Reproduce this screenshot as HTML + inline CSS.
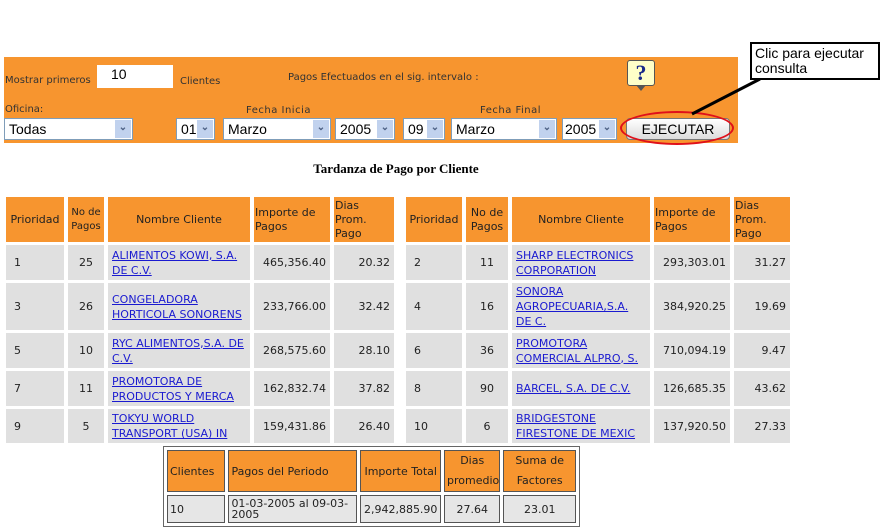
<!DOCTYPE html>
<html><head><meta charset="utf-8"><style>
body{margin:0;width:884px;height:532px;background:#fff;position:relative;overflow:hidden;font-family:"DejaVu Sans","Liberation Sans",sans-serif;}
.a{position:absolute;}
.bar{left:4px;top:57px;width:734px;height:86px;background:#f7952f;}
.lbl{font-size:10px;color:#333;white-space:nowrap;}
.sel{position:absolute;top:118px;height:22px;background:#fff;border:1px solid #7f9db9;box-sizing:border-box;font-family:"Liberation Sans",sans-serif;font-size:14px;line-height:20px;padding-left:4px;color:#000;}
.sel b{position:absolute;right:1px;top:1px;width:16px;height:18px;background:#c1d2ee;font-size:10px;line-height:16px;text-align:center;color:#4d6185;font-weight:bold;}
table.t{position:absolute;border-spacing:4px 3px;table-layout:fixed;font-size:11px;}
table.t td{background:#e0e0e0;padding:0 4px;color:#222;line-height:15px;}
table.t td:first-child{padding-left:8px;}
table.t th{background:#f7952f;font-weight:normal;color:#222;padding:0 1px;text-align:center;line-height:14px;}
table.t a{color:#1a1ad0;text-decoration:underline;}
.r{text-align:right;}.c{text-align:center;}
table.s{position:absolute;left:163px;top:446px;border:1px solid #666;border-spacing:3px;font-size:11px;table-layout:fixed;}
table.s td,table.s th{border:1px solid #555;padding:0 2px;color:#222;}
table.s th{background:#f7952f;font-weight:normal;}
table.s td{background:#e6e6e6;}
</style></head><body>
<div class="a bar"></div>
<div class="a lbl" style="left:5px;top:75px;">Mostrar primeros</div>
<div class="a" style="left:97px;top:65px;width:76px;height:23px;background:#fff;font-family:'Liberation Sans',sans-serif;font-size:14px;line-height:18px;padding-left:14px;box-sizing:border-box;">10</div>
<div class="a lbl" style="left:180px;top:76px;">Clientes</div>
<div class="a lbl" style="left:288px;top:72px;">Pagos Efectuados en el sig. intervalo :</div>
<div class="a" style="left:627px;top:60px;width:26px;height:24px;background:#ffffc8;border:1px solid #555;border-radius:3px;font:bold 22px 'Liberation Serif',serif;color:#1a2a8a;text-align:center;line-height:24px;">?</div>
<div class="a" style="left:636px;top:85px;width:0;height:0;border-left:5px solid transparent;border-right:5px solid transparent;border-top:6px solid #555;"></div>
<div class="a lbl" style="left:5px;top:104px;">Oficina:</div>
<div class="a lbl" style="left:246px;top:105px;letter-spacing:.5px;">Fecha Inicia</div>
<div class="a lbl" style="left:480px;top:105px;letter-spacing:.5px;">Fecha Final</div>
<div class="sel" style="left:4px;width:129px;">Todas<b>&#8964;</b></div>
<div class="sel" style="left:176px;width:39px;">01<b>&#8964;</b></div>
<div class="sel" style="left:223px;width:108px;">Marzo<b>&#8964;</b></div>
<div class="sel" style="left:335px;width:60px;">2005<b>&#8964;</b></div>
<div class="sel" style="left:403px;width:42px;">09<b>&#8964;</b></div>
<div class="sel" style="left:451px;width:106px;">Marzo<b>&#8964;</b></div>
<div class="sel" style="left:562px;width:55px;padding-left:2px;">2005<b>&#8964;</b></div>
<div class="a" style="left:626px;top:118px;width:104px;height:22px;background:linear-gradient(#fff,#dcdcdc);border:1px solid #777;border-radius:4px;box-sizing:border-box;font-family:'Liberation Sans',sans-serif;font-size:14px;text-align:center;line-height:20px;">EJECUTAR</div>
<div class="a" style="left:620px;top:111px;width:114px;height:34px;border:2px solid #e0101a;border-radius:50%;box-sizing:border-box;"></div>
<svg class="a" style="left:0;top:0" width="884" height="160"><line x1="692" y1="114" x2="760" y2="79" stroke="#000" stroke-width="3"/></svg>
<div class="a" style="left:750px;top:42px;width:130px;height:38px;border:2px solid #000;box-sizing:border-box;background:#fff;font-family:'Liberation Sans',sans-serif;font-size:14px;line-height:15px;padding:2px 0 0 3px;">Clic para ejecutar<br>consulta</div>
<div class="a" style="left:0;top:161px;width:792px;text-align:center;font:bold 13px 'Liberation Serif',serif;">Tardanza de Pago por Cliente</div>

<table class="t" style="left:2px;top:194px;width:396px;">
<colgroup><col style="width:58px"><col style="width:36px"><col style="width:142px"><col style="width:76px"><col style="width:60px"></colgroup>
<tr style="height:45px"><th>Prioridad</th><th style="font-size:10px">No de Pagos</th><th>Nombre Cliente</th><th style="text-align:left">Importe de Pagos</th><th style="text-align:left">Dias Prom. Pago</th></tr>
<tr style="height:35px"><td>1</td><td class="c">25</td><td><a>ALIMENTOS KOWI, S.A. DE C.V.</a></td><td class="r">465,356.40</td><td class="r">20.32</td></tr>
<tr style="height:47px"><td>3</td><td class="c">26</td><td><a>CONGELADORA HORTICOLA SONORENS</a></td><td class="r">233,766.00</td><td class="r">32.42</td></tr>
<tr style="height:35px"><td>5</td><td class="c">10</td><td><a>RYC ALIMENTOS,S.A. DE C.V.</a></td><td class="r">268,575.60</td><td class="r">28.10</td></tr>
<tr style="height:35px"><td>7</td><td class="c">11</td><td><a>PROMOTORA DE PRODUCTOS Y MERCA</a></td><td class="r">162,832.74</td><td class="r">37.82</td></tr>
<tr style="height:34px"><td>9</td><td class="c">5</td><td><a>TOKYU WORLD TRANSPORT (USA) IN</a></td><td class="r">159,431.86</td><td class="r">26.40</td></tr>
</table>

<table class="t" style="left:402px;top:194px;width:392px;">
<colgroup><col style="width:56px"><col style="width:42px"><col style="width:138px"><col style="width:76px"><col style="width:56px"></colgroup>
<tr style="height:45px"><th>Prioridad</th><th>No de Pagos</th><th>Nombre Cliente</th><th style="text-align:left">Importe de Pagos</th><th style="text-align:left">Dias Prom. Pago</th></tr>
<tr style="height:35px"><td>2</td><td class="c">11</td><td><a>SHARP ELECTRONICS CORPORATION</a></td><td class="r">293,303.01</td><td class="r">31.27</td></tr>
<tr style="height:47px"><td>4</td><td class="c">16</td><td><a>SONORA AGROPECUARIA,S.A. DE C.</a></td><td class="r">384,920.25</td><td class="r">19.69</td></tr>
<tr style="height:35px"><td>6</td><td class="c">36</td><td><a>PROMOTORA COMERCIAL ALPRO, S.</a></td><td class="r">710,094.19</td><td class="r">9.47</td></tr>
<tr style="height:35px"><td>8</td><td class="c">90</td><td><a>BARCEL, S.A. DE C.V.</a></td><td class="r">126,685.35</td><td class="r">43.62</td></tr>
<tr style="height:34px"><td>10</td><td class="c">6</td><td><a>BRIDGESTONE FIRESTONE DE MEXIC</a></td><td class="r">137,920.50</td><td class="r">27.33</td></tr>
</table>

<table class="s" style="width:417px;">
<colgroup><col style="width:58px"><col style="width:128px"><col style="width:80px"><col style="width:56px"><col style="width:72px"></colgroup>
<tr style="height:37px"><th style="text-align:left">Clientes</th><th style="text-align:left">Pagos del Periodo</th><th>Importe Total</th><th style="line-height:20px">Dias promedio</th><th style="line-height:20px">Suma de Factores</th></tr>
<tr style="height:28px"><td>10</td><td style="line-height:11px">01-03-2005 al 09-03-2005</td><td class="c">2,942,885.90</td><td class="c">27.64</td><td class="c">23.01</td></tr>
</table>
</body></html>
